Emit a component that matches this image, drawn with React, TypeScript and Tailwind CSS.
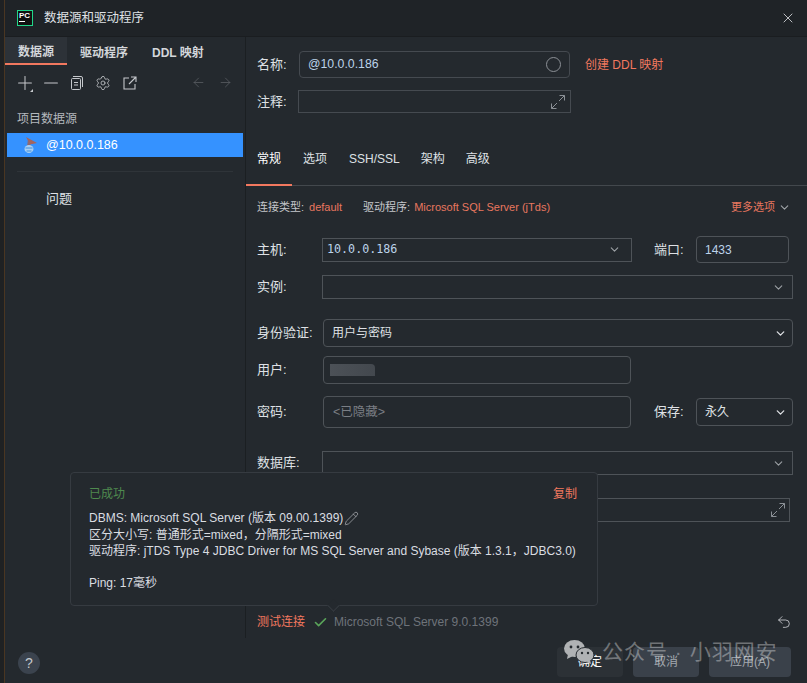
import { ArrowLeft, ArrowRight, Check, ChevronDown, Minus, Pencil, Plus, Settings, Undo2, X } from 'lucide-react';

const font = { fontFamily: '"Liberation Sans", "Noto Sans CJK SC", sans-serif' };

function Expand() {
  return (
    <svg width="16" height="16" viewBox="0 0 16 16" fill="none" stroke="#8b9096" strokeWidth="1">
      <path d="M9.5 1.5h5v5M14.5 1.5l-5.5 5.5M6.5 14.5h-5v-5M1.5 14.5l5.5-5.5" />
    </svg>
  );
}

function Label({ children, wide }: { children: React.ReactNode; wide?: boolean }) {
  return <span className={wide ? 'text-[13px] text-[#dfe1e5] w-[66px] shrink-0' : 'text-[13px] text-[#dfe1e5] w-[65px] shrink-0'}>{children}</span>;
}

function SqlIcon() {
  return (
    <svg width="16" height="18" viewBox="0 0 16 18">
      <path d="M3 1l11 6-7 1.5z" fill="#a5655e" />
      <path d="M5 3l3 7-4 1z" fill="#8f6a70" />
      <ellipse cx="6" cy="13" rx="4.5" ry="4" fill="#a9d0f5" />
      <path d="M2.5 12h7M3.5 15h5" stroke="#3f8fdc" strokeWidth="1" />
    </svg>
  );
}

function WeChat() {
  return (
    <svg width="30" height="24" viewBox="0 0 30 24" className="text-[#b0b2b4]" fill="currentColor">
      <ellipse cx="10.5" cy="8.5" rx="10.5" ry="8.5" />
      <path d="M4 14l-1 5 6-3z" />
      <ellipse cx="21" cy="15" rx="9" ry="7.5" stroke="#24292e" strokeWidth="1" />
      <path d="M26 20l1 4-5-2z" />
      <circle cx="7" cy="7" r="1.4" fill="#24292e" />
      <circle cx="14" cy="7" r="1.4" fill="#24292e" />
      <circle cx="18" cy="13" r="1.2" fill="#24292e" />
      <circle cx="24" cy="13" r="1.2" fill="#24292e" />
    </svg>
  );
}

export default function App() {
  return (
    <div style={font} className="relative w-[807px] h-[683px] overflow-hidden bg-[#1f2123] pl-[4px]">
      <div className="h-full bg-[#24292e] text-[#dfe1e5] border-l border-[#4a3622]">
        {/* title bar */}
        <div className="h-[37px] bg-[#1f2327] border-b border-[#1a1d20] flex items-center">
          <div className="ml-[12px] w-[16px] h-[16px] bg-[#111] border-[1.5px] border-[#21d789] flex flex-col px-[1px] pt-[1px]">
            <span className="text-[8px] leading-[8px] font-bold text-white">PC</span>
            <span className="mt-[1px] w-[6px] h-[1px] bg-white" />
          </div>
          <span className="ml-[11px] text-[12.5px] text-[#dfe1e5]">数据源和驱动程序</span>
          <X size={16} strokeWidth={1.2} className="ml-auto mr-[11px] text-[#e4e6ea]" />
        </div>

        <div className="flex h-[601px]">
          {/* sidebar */}
          <div className="w-[241px] shrink-0 border-r border-[#1b1f22]">
            <div className="flex h-[28px] text-[12px] font-bold text-[#d3d6da]">
              <div className="w-[62px] pt-[3px] bg-[#2d3238] border-b-2 border-[#f2785f] flex items-center justify-center">数据源</div>
              <div className="ml-[13px] pt-[3px] flex items-center">驱动程序</div>
              <div className="ml-[24px] pt-[3px] flex items-center">DDL 映射</div>
            </div>
            <div className="flex items-center h-[35px] pl-[9px] text-[#c5c8cc]">
              <div className="relative w-[22px]">
                <Plus size={22} strokeWidth={1.1} />
                <span className="absolute right-[3px] bottom-[2px] w-0 h-0 border-l-[3px] border-b-[3px] border-l-transparent border-b-[#c5c8cc]" />
              </div>
              <Minus size={22} strokeWidth={1.1} className="ml-[4px]" />
              <svg width="13" height="14" viewBox="0 0 13 14" fill="none" stroke="currentColor" strokeWidth="1" className="ml-[8px]">
                <path d="M2.5 2.5h7a1 1 0 011 1v9a1 1 0 01-1 1h-7a1 1 0 01-1-1v-9a1 1 0 011-1zM3 .5h8a1.5 1.5 0 011.5 1.5v9M4 6.5h4M4 9h4" />
              </svg>
              <Settings size={16} strokeWidth={1.2} className="ml-[12px]" />
              <svg width="14" height="14" viewBox="0 0 14 14" fill="none" stroke="currentColor" strokeWidth="1.1" className="ml-[12px]">
                <path d="M6 2H1v11h11V8M8 1h5v5M13 1L6 8" />
              </svg>
              <ArrowLeft size={15} strokeWidth={1.2} className="ml-[54px] text-[#5c6066]" />
              <ArrowRight size={15} strokeWidth={1.2} className="ml-[12px] text-[#5c6066]" />
            </div>
            <div className="mt-[10px] ml-[12px] text-[12px] leading-[18px] text-[#b4b8bd]">项目数据源</div>
            <div className="mt-[5px] ml-[2px] mr-[2px] h-[24px] bg-[#3592ff] flex items-center text-white text-[12.5px]">
              <span className="ml-[16px]"><SqlIcon /></span>
              <span className="ml-[7px]">@10.0.0.186</span>
            </div>
            <div className="mt-[14px] mx-[12px] h-px bg-[#2f3439]" />
            <div className="mt-[18px] ml-[41px] text-[13px] leading-[18px]">问题</div>
          </div>

          {/* form */}
          <div className="flex-1 min-w-0">
            <div className="pt-[14px] pl-[11px] pr-[14px]">
              <div className="flex items-center">
                <span className="text-[13px] w-[42px]">名称:</span>
                <div className="w-[271px] h-[27px] rounded-[4px] border border-[#454a50] flex items-center pl-[8px] pr-[8px] text-[12.3px] text-[#bcd3ea]">
                  @10.0.0.186
                  <span className="ml-auto w-[15px] h-[15px] rounded-full border-[1.5px] border-[#8c9096]" />
                </div>
                <span className="ml-[15px] text-[12px] text-[#f2785f]">创建 DDL 映射</span>
              </div>
              <div className="flex items-center mt-[12px]">
                <span className="text-[13px] w-[41px]">注释:</span>
                <div className="w-[273px] h-[23px] border border-[#454a50] flex items-center justify-end pr-[4px]"><Expand /></div>
              </div>
            </div>

            <div className="mt-[33px] h-[40px] border-b border-[#43484d] flex text-[12px]">
              <div className="w-[46px] h-[40px] pb-[12px] border-b-2 border-[#f2785f] flex items-center justify-center text-white">常规</div>
              <div className="ml-[11px] pb-[12px] flex items-center h-[38px]">选项</div>
              <div className="ml-[22px] pb-[12px] flex items-center h-[38px]">SSH/SSL</div>
              <div className="ml-[21px] pb-[12px] flex items-center h-[38px]">架构</div>
              <div className="ml-[21px] pb-[12px] flex items-center h-[38px]">高级</div>
            </div>

            <div className="pl-[11px] pr-[14px]">
              <div className="mt-[12px] h-[18px] flex items-center text-[11px] text-[#c4c7cb]">
                <span>连接类型:</span>
                <span className="ml-[5px] text-[#e8775f]">default</span>
                <span className="ml-[21px]">驱动程序:</span>
                <span className="ml-[4px] text-[#e8775f]">Microsoft SQL Server (jTds)</span>
                <span className="ml-auto text-[#e8775f]">更多选项</span>
                <ChevronDown size={13} className="ml-[3px] mr-[2px] text-[#a0a4a9]" />
              </div>

              <div className="mt-[20px] flex items-center">
                <Label>主机:</Label>
                <div className="w-[310px] h-[24px] border border-[#4e5358] flex items-center pl-[4px] pr-[10px] text-[11.7px] text-[#bcd3ea]" style={{ fontFamily: '"DejaVu Sans Mono", monospace' }}>
                  10.0.0.186
                  <ChevronDown size={13} className="ml-auto text-[#9ca0a5]" />
                </div>
                <span className="ml-[22px] text-[13px] w-[42px]">端口:</span>
                <div className="w-[93px] h-[27px] rounded-[4px] border border-[#4e5358] flex items-center pl-[8px] text-[12px] text-[#bcd3ea]">1433</div>
              </div>
              <div className="mt-[12px] flex items-center">
                <Label>实例:</Label>
                <div className="flex-1 h-[24px] border border-[#4e5358] flex items-center justify-end pr-[7px]">
                  <ChevronDown size={13} className="text-[#9ca0a5]" />
                </div>
              </div>

              <div className="mt-[20px] flex items-center">
                <Label wide>身份验证:</Label>
                <div className="flex-1 h-[28px] rounded-[4px] border border-[#4e5358] flex items-center pl-[8px] pr-[5px] text-[12px]">
                  用户与密码
                  <ChevronDown size={13} strokeWidth={2.4} className="ml-auto" />
                </div>
              </div>
              <div className="mt-[9px] flex items-center">
                <Label wide>用户:</Label>
                <div className="w-[308px] h-[28px] rounded-[4px] border border-[#4e5358] flex items-center pl-[6px]">
                  <span className="w-[45px] h-[12px] rounded-tr-[4px] bg-gradient-to-r from-[#4c5157] to-[#43484e]" />
                </div>
              </div>
              <div className="mt-[12px] flex items-center">
                <Label wide>密码:</Label>
                <div className="w-[308px] h-[32px] rounded-[4px] border border-[#4e5358] flex items-center pl-[9px] text-[12.5px] text-[#7a7e84]">&lt;已隐藏&gt;</div>
                <span className="ml-[23px] text-[13px] w-[42px]">保存:</span>
                <div className="w-[97px] h-[28px] rounded-[4px] border border-[#4e5358] flex items-center pl-[8px] pr-[5px] text-[12px]">
                  永久
                  <ChevronDown size={13} strokeWidth={2.4} className="ml-auto" />
                </div>
              </div>

              <div className="mt-[23px] flex items-center">
                <Label>数据库:</Label>
                <div className="flex-1 h-[24px] border border-[#4e5358] flex items-center justify-end pr-[7px]">
                  <ChevronDown size={13} className="text-[#9ca0a5]" />
                </div>
              </div>
              <div className="mt-[23px] ml-[65px] mr-[3px] h-[24px] border border-[#4e5358] flex items-center justify-end pr-[3px]"><Expand /></div>

              <div className="mt-[88px] h-[24px] flex items-center text-[12px]">
                <span className="text-[#f2785f]">测试连接</span>
                <Check size={15} strokeWidth={2.6} className="ml-[8px] text-[#5aa55a]" />
                <span className="ml-[6px] text-[#6e737a]">Microsoft SQL Server 9.0.1399</span>
                <Undo2 size={16} strokeWidth={1.2} className="ml-auto mr-[1px] text-[#d4d6da]" />
              </div>
            </div>
          </div>
        </div>

        {/* footer */}
        <div className="h-[45px] flex items-start">
          <div className="ml-[13px] mt-[14px] w-[22px] h-[22px] rounded-full bg-[#3b434e] flex items-center justify-center text-[14px] text-[#c4c8cd]">?</div>
          <div className="ml-auto mr-[16px] mt-[9px] flex gap-[10px] text-[12px]">
            <div className="w-[66px] h-[30px] rounded-[4px] bg-[#2c3136] flex items-center justify-center text-white">确定</div>
            <div className="w-[66px] h-[30px] rounded-[4px] bg-[#3a414a] flex items-center justify-center text-[#a3a8ae]">取消</div>
            <div className="w-[82px] h-[30px] rounded-[4px] bg-[#3a414a] flex items-center justify-center text-[#a3a8ae]">应用(A)</div>
          </div>
        </div>
      </div>

      {/* result popup */}
      <div className="absolute left-[70px] top-[472px] w-[528px] h-[134px] rounded-[4px] bg-[#24292e] border border-[#363b41] pl-[18px] pr-[20px] text-[12px] text-[#dadde1]">
        <div className="mt-[12px] flex justify-between h-[18px] items-center">
          <span className="text-[#4f8a4f]">已成功</span>
          <span className="text-[#f2785f]">复制</span>
        </div>
        <div className="mt-[7px] leading-[16.5px]">
          <div className="flex items-center">DBMS: Microsoft SQL Server (版本 09.00.1399)<Pencil size={15} strokeWidth={1.1} className="ml-[1px] text-[#b5b8bc]" /></div>
          <div>区分大小写: 普通形式=mixed，分隔形式=mixed</div>
          <div className="whitespace-nowrap">驱动程序: jTDS Type 4 JDBC Driver for MS SQL Server and Sybase (版本 1.3.1，JDBC3.0)</div>
          <div className="mt-[15px]">Ping: 17毫秒</div>
        </div>
        <span className="absolute left-[258px] bottom-[-5px] w-[9px] h-[9px] rotate-45 bg-[#24292e] border-r border-b border-[#363b41]" />
      </div>

      {/* watermark */}
      <div className="absolute left-[564px] top-[636px] flex items-center text-white/35 text-[21px] tracking-[1px] pointer-events-none">
        <WeChat />
        <span className="ml-[8px] whitespace-nowrap">公众号 · 小羽网安</span>
      </div>
    </div>
  );
}
